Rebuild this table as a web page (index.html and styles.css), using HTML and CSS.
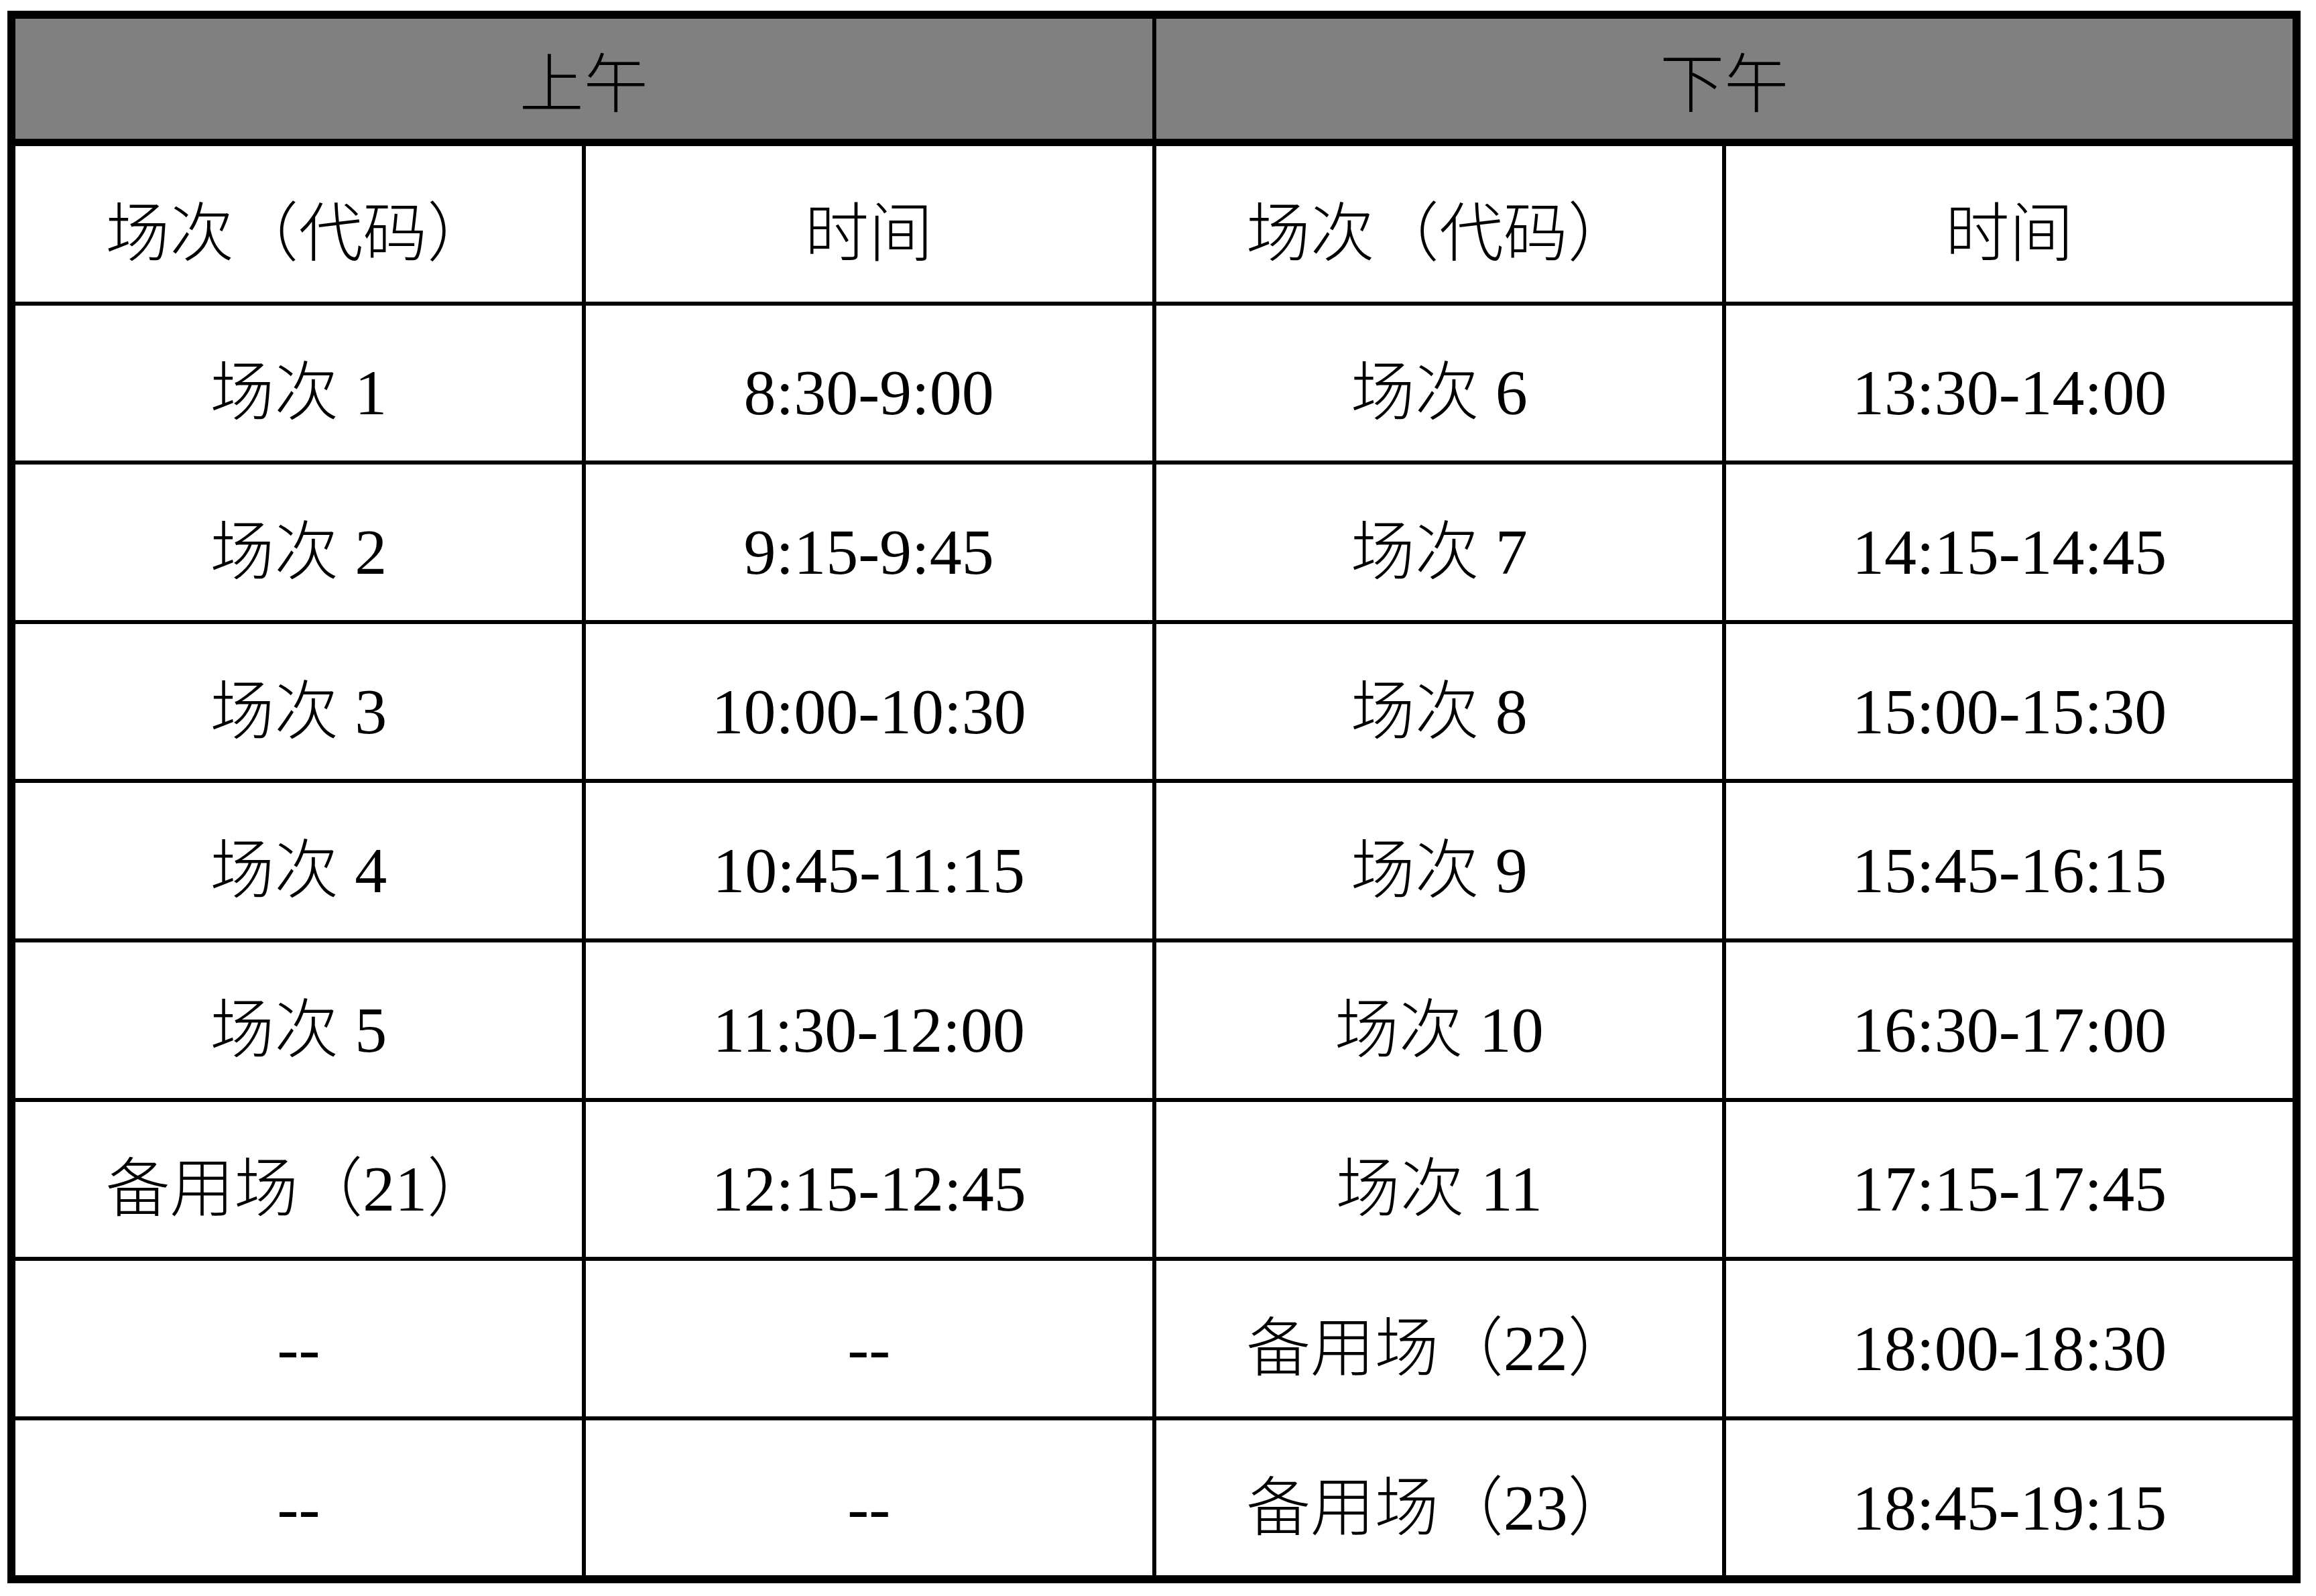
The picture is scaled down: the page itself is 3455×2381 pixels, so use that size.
FILE: index.html
```html
<!DOCTYPE html>
<html lang="zh-CN">
<head>
<meta charset="utf-8">
<title>场次时间表</title>
<link rel="stylesheet" href="styles.css">
</head>
<body>
<div class="schedule">
  <div class="head">上午</div>
  <div class="head">下午</div>

  <div class="cell">场次（代码）</div>
  <div class="cell">时间</div>
  <div class="cell">场次（代码）</div>
  <div class="cell">时间</div>

  <div class="cell">场次 1</div>
  <div class="cell">8:30-9:00</div>
  <div class="cell">场次 6</div>
  <div class="cell">13:30-14:00</div>

  <div class="cell">场次 2</div>
  <div class="cell">9:15-9:45</div>
  <div class="cell">场次 7</div>
  <div class="cell">14:15-14:45</div>

  <div class="cell">场次 3</div>
  <div class="cell">10:00-10:30</div>
  <div class="cell">场次 8</div>
  <div class="cell">15:00-15:30</div>

  <div class="cell">场次 4</div>
  <div class="cell">10:45-11:15</div>
  <div class="cell">场次 9</div>
  <div class="cell">15:45-16:15</div>

  <div class="cell">场次 5</div>
  <div class="cell">11:30-12:00</div>
  <div class="cell">场次 10</div>
  <div class="cell">16:30-17:00</div>

  <div class="cell">备用场（21）</div>
  <div class="cell">12:15-12:45</div>
  <div class="cell">场次 11</div>
  <div class="cell">17:15-17:45</div>

  <div class="cell">--</div>
  <div class="cell">--</div>
  <div class="cell">备用场（22）</div>
  <div class="cell">18:00-18:30</div>

  <div class="cell">--</div>
  <div class="cell">--</div>
  <div class="cell">备用场（23）</div>
  <div class="cell">18:45-19:15</div>
</div>
</body>
</html>
```

FILE: styles.css
```css
html, body {
  margin: 0;
  padding: 0;
  background: #ffffff;
}

body {
  padding: 16px 0 0 11px;
  font-family: "Liberation Serif", "Noto Sans CJK SC", serif;
  font-weight: 300;
  color: #000000;
}

.schedule {
  display: grid;
  width: 3421px;
  box-sizing: border-box;
  grid-template-columns: repeat(4, 1fr);
  grid-template-rows: 184px repeat(9, 231.6px);
  gap: 6px;
  border: 12px solid #000000;
  background: #000000;
}

.head {
  grid-column: span 2;
  background: #808080;
  margin-bottom: 5px;
  display: flex;
  align-items: center;
  justify-content: center;
  box-sizing: border-box;
  padding-top: 18px;
  font-size: 96px;
  line-height: 1;
}

.cell {
  background: #ffffff;
  display: flex;
  align-items: center;
  justify-content: center;
  box-sizing: border-box;
  padding-top: 30px;
  font-size: 96px;
  line-height: 1;
  white-space: nowrap;
}
```
